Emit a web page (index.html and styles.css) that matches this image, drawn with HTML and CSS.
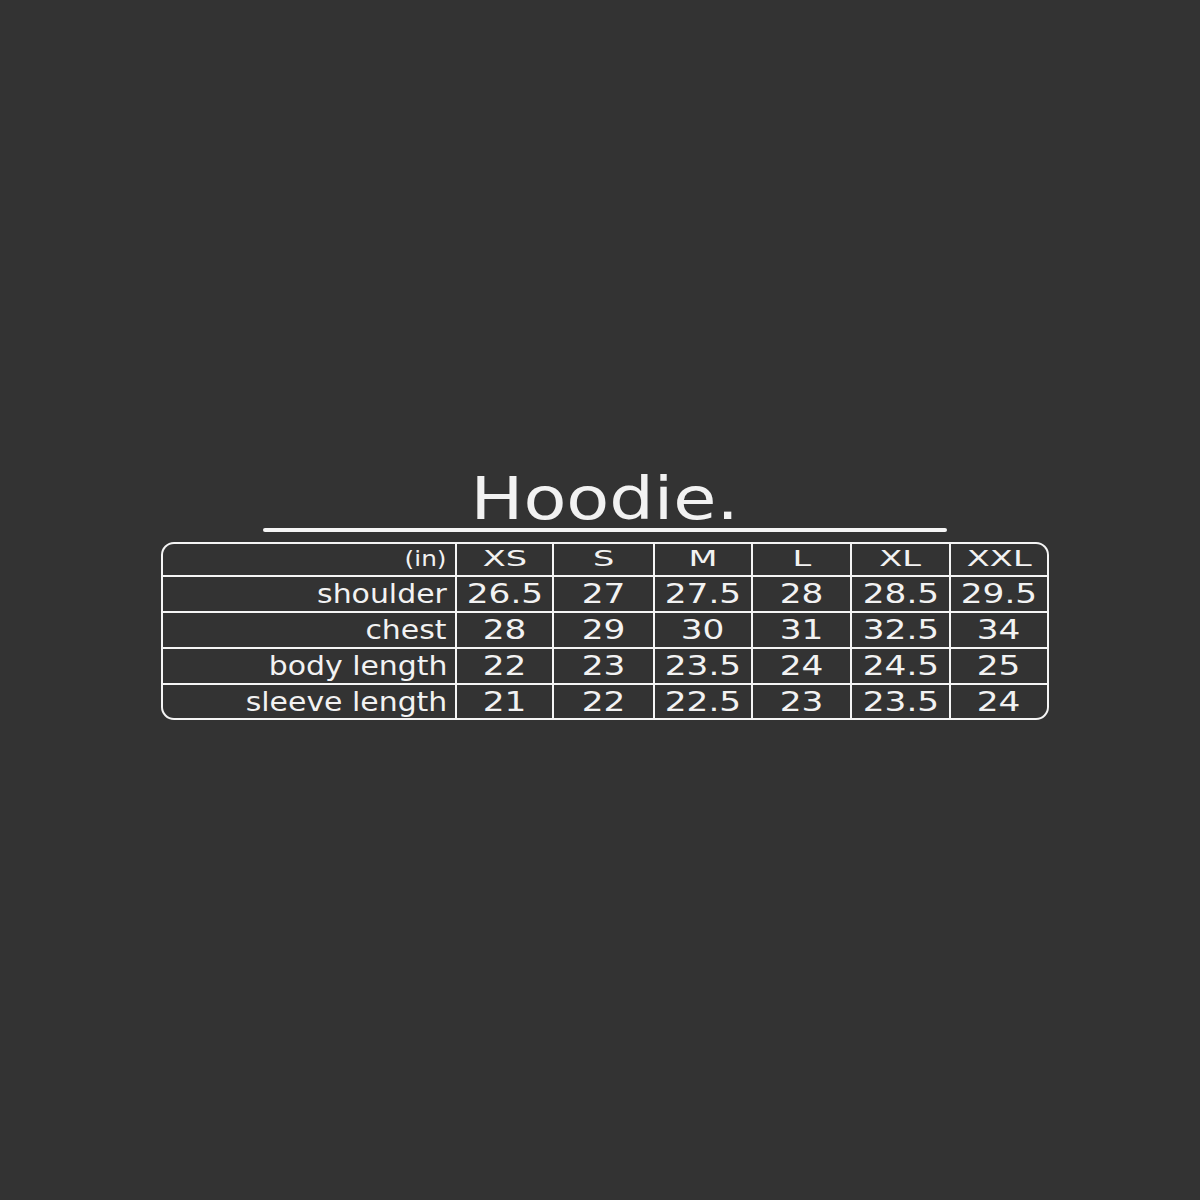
FILE: index.html
```html
<!DOCTYPE html>
<html>
<head>
<meta charset="utf-8">
<link rel="stylesheet" href="styles.css">
</head>
<body>
<main class="page">
  <section class="chart">
    <h1 class="title"><span class="wide">Hoodie.</span></h1>
    <div class="rule"></div>
    <div class="grid">
      <div class="cell label head"><span class="w">(in)</span></div>
      <div class="cell head"><span class="w">XS</span></div>
      <div class="cell head"><span class="w">S</span></div>
      <div class="cell head"><span class="w">M</span></div>
      <div class="cell head"><span class="w">L</span></div>
      <div class="cell head"><span class="w">XL</span></div>
      <div class="cell head"><span class="w">XXL</span></div>

      <div class="cell label"><span class="w">shoulder</span></div>
      <div class="cell"><span class="w">26.5</span></div>
      <div class="cell"><span class="w">27</span></div>
      <div class="cell"><span class="w">27.5</span></div>
      <div class="cell"><span class="w">28</span></div>
      <div class="cell"><span class="w">28.5</span></div>
      <div class="cell"><span class="w">29.5</span></div>

      <div class="cell label"><span class="w">chest</span></div>
      <div class="cell"><span class="w">28</span></div>
      <div class="cell"><span class="w">29</span></div>
      <div class="cell"><span class="w">30</span></div>
      <div class="cell"><span class="w">31</span></div>
      <div class="cell"><span class="w">32.5</span></div>
      <div class="cell"><span class="w">34</span></div>

      <div class="cell label"><span class="w">body length</span></div>
      <div class="cell"><span class="w">22</span></div>
      <div class="cell"><span class="w">23</span></div>
      <div class="cell"><span class="w">23.5</span></div>
      <div class="cell"><span class="w">24</span></div>
      <div class="cell"><span class="w">24.5</span></div>
      <div class="cell"><span class="w">25</span></div>

      <div class="cell label"><span class="w">sleeve length</span></div>
      <div class="cell"><span class="w">21</span></div>
      <div class="cell"><span class="w">22</span></div>
      <div class="cell"><span class="w">22.5</span></div>
      <div class="cell"><span class="w">23</span></div>
      <div class="cell"><span class="w">23.5</span></div>
      <div class="cell"><span class="w">24</span></div>
    </div>
  </section>
</main>
</body>
</html>
```

FILE: styles.css
```css
html, body {
  margin: 0;
  padding: 0;
  background: #333333;
}
body {
  width: 1200px;
  height: 1200px;
  font-family: "DejaVu Sans", "Liberation Sans", sans-serif;
  color: #f2f2f2;
}
.page {
  display: flex;
  justify-content: center;
  padding-top: 469px;
}
.chart {
  width: 888px;
  margin-left: 10px;
  display: flex;
  flex-direction: column;
  align-items: center;
}
.title {
  margin: 0;
  font-size: 59px;
  font-weight: normal;
  line-height: 60px;
  height: 60px;
  text-align: center;
}
.wide {
  display: inline-block;
  transform: scaleX(1.19);
  transform-origin: center;
}
.rule {
  width: 684px;
  height: 4px;
  border-radius: 2px;
  background: #f5f5f5;
  margin-top: -1px;
  margin-bottom: 10px;
}
.grid {
  width: 888px;
  box-sizing: border-box;
  display: grid;
  grid-template-columns: 292px 95px 99px 96px 97px 97px 96px;
  grid-template-rows: 31px 34px 34px 34px 33px;
  gap: 2px;
  background: #f5f5f5;
  border: 2px solid #f5f5f5;
  border-radius: 13px;
  overflow: hidden;
}
.cell {
  background: #333333;
  display: flex;
  align-items: center;
  justify-content: center;
  font-size: 26px;
  line-height: 1;
  white-space: nowrap;
}
.cell .w {
  display: inline-block;
  transform: scaleX(1.32);
  transform-origin: center;
}
.cell.label {
  justify-content: flex-end;
  padding-right: 8px;
}
.cell.label .w {
  transform: scaleX(1.15);
  transform-origin: right center;
}
.cell.head {
  font-size: 21px;
}
.cell.head .w {
  transform: scaleX(1.6);
}
.cell.label.head .w {
  transform: scaleX(1.18);
}
```
